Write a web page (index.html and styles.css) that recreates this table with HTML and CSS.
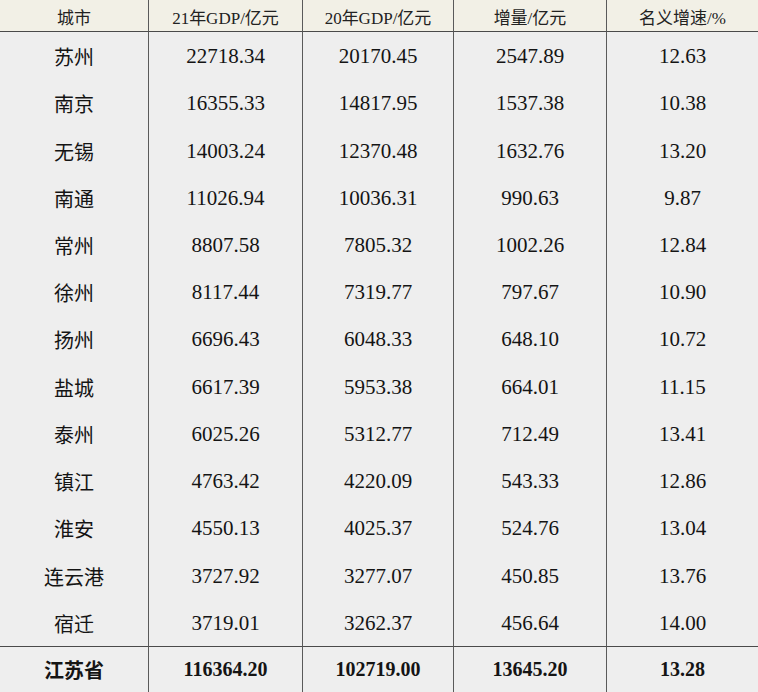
FILE: index.html
```html
<!DOCTYPE html>
<html lang="zh-CN">
<head>
<meta charset="utf-8">
<title>江苏各市GDP</title>
<link rel="stylesheet" href="styles.css">
</head>
<body>
<div class="table">
  <div class="cell head first">城市</div>
  <div class="cell head">21年GDP/亿元</div>
  <div class="cell head">20年GDP/亿元</div>
  <div class="cell head">增量/亿元</div>
  <div class="cell head">名义增速/%</div>

  <div class="cell city first">苏州</div><div class="cell num">22718.34</div><div class="cell num">20170.45</div><div class="cell num">2547.89</div><div class="cell num">12.63</div>
  <div class="cell city first">南京</div><div class="cell num">16355.33</div><div class="cell num">14817.95</div><div class="cell num">1537.38</div><div class="cell num">10.38</div>
  <div class="cell city first">无锡</div><div class="cell num">14003.24</div><div class="cell num">12370.48</div><div class="cell num">1632.76</div><div class="cell num">13.20</div>
  <div class="cell city first">南通</div><div class="cell num">11026.94</div><div class="cell num">10036.31</div><div class="cell num">990.63</div><div class="cell num">9.87</div>
  <div class="cell city first">常州</div><div class="cell num">8807.58</div><div class="cell num">7805.32</div><div class="cell num">1002.26</div><div class="cell num">12.84</div>
  <div class="cell city first">徐州</div><div class="cell num">8117.44</div><div class="cell num">7319.77</div><div class="cell num">797.67</div><div class="cell num">10.90</div>
  <div class="cell city first">扬州</div><div class="cell num">6696.43</div><div class="cell num">6048.33</div><div class="cell num">648.10</div><div class="cell num">10.72</div>
  <div class="cell city first">盐城</div><div class="cell num">6617.39</div><div class="cell num">5953.38</div><div class="cell num">664.01</div><div class="cell num">11.15</div>
  <div class="cell city first">泰州</div><div class="cell num">6025.26</div><div class="cell num">5312.77</div><div class="cell num">712.49</div><div class="cell num">13.41</div>
  <div class="cell city first">镇江</div><div class="cell num">4763.42</div><div class="cell num">4220.09</div><div class="cell num">543.33</div><div class="cell num">12.86</div>
  <div class="cell city first">淮安</div><div class="cell num">4550.13</div><div class="cell num">4025.37</div><div class="cell num">524.76</div><div class="cell num">13.04</div>
  <div class="cell city first">连云港</div><div class="cell num">3727.92</div><div class="cell num">3277.07</div><div class="cell num">450.85</div><div class="cell num">13.76</div>
  <div class="cell city first">宿迁</div><div class="cell num">3719.01</div><div class="cell num">3262.37</div><div class="cell num">456.64</div><div class="cell num">14.00</div>

  <div class="cell city total first">江苏省</div><div class="cell num total">116364.20</div><div class="cell num total">102719.00</div><div class="cell num total">13645.20</div><div class="cell num total">13.28</div>
</div>
</body>
</html>
```
FILE: styles.css
```css
html, body {
  margin: 0;
  padding: 0;
  background: #eeeeee;
}

.table {
  display: grid;
  grid-template-columns: 148px 154px 151px 153px 152px;
  grid-template-rows: 32px repeat(13, 1fr) 46px;
  width: 758px;
  height: 692px;
  background: #eeeeee;
  color: #141414;
}

.cell {
  display: flex;
  align-items: center;
  justify-content: center;
  border-left: 1px solid #5a5a5a;
  box-sizing: border-box;
  white-space: nowrap;
}

.cell.first {
  border-left: none;
}

.head {
  background: #f2f0e6;
  border-bottom: 1px solid #4a4a4a;
  font-family: "Liberation Serif", "Noto Sans CJK SC", serif;
  font-size: 17px;
  color: #222;
  padding-top: 1px;
}

.city {
  font-family: "Noto Sans CJK SC", "Noto Sans", sans-serif;
  font-size: 20px;
  padding-top: 2px;
}

.num {
  font-family: "Liberation Serif", "Noto Sans CJK SC", serif;
  font-size: 21px;
  padding-top: 2px;
}

.total {
  border-top: 1px solid #4a4a4a;
  font-weight: bold;
  font-size: 20px;
  padding-top: 0;
}

.city.total {
  font-size: 20px;
}
```
